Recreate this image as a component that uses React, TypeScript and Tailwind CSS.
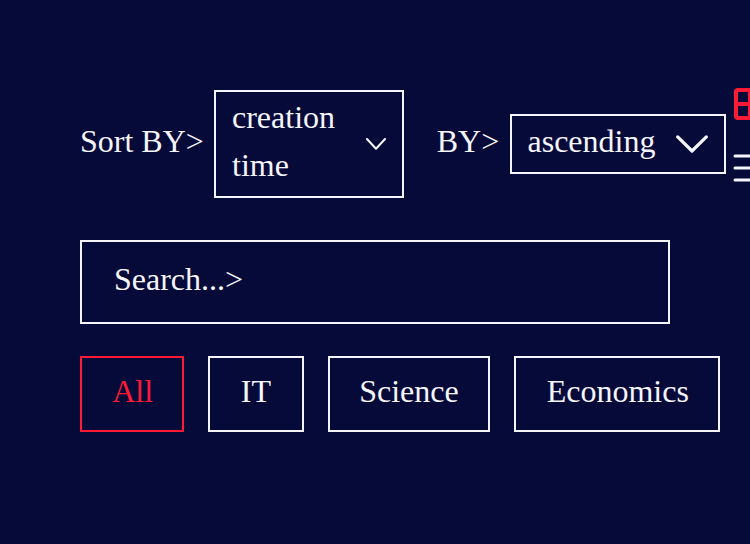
import React from "react";

const tabs = [
  { label: "All", size: "w-[104px] pl-[30.2px]", tone: "border-[#ff1a35] text-[#ff1a35]" },
  { label: "IT", size: "w-[96px] pl-[30.8px]", tone: "border-[#f5f5ff]" },
  { label: "Science", size: "w-[162px] pl-[29.2px]", tone: "border-[#f5f5ff]" },
  { label: "Economics", size: "w-[206px] pl-[30.7px]", tone: "border-[#f5f5ff]" },
];

export default function App() {
  return (
    <main className="h-[544px] w-[750px] overflow-hidden bg-[#050a38] pt-[88px] pl-20 font-['Liberation_Serif',serif] text-[32px] leading-[48px] text-[#f5f5ff]">
      <div className="flex w-[700px] items-start">
        <div className="flex h-28 shrink-0 items-center">
          <span className="w-[134px] whitespace-nowrap pb-1.5">Sort BY&gt;</span>
          <div className="flex h-[108px] w-[190px] items-center border-2 border-[#f5f5ff] pl-4">
            <span className="w-[120px] pb-1.5">creation time</span>
            <svg className="ml-[14px] h-3 w-5" viewBox="0 0 20 12" fill="none" stroke="currentColor" strokeWidth="2" strokeLinecap="round" strokeLinejoin="round">
              <path d="M1 1 10 10.8 19 1" />
            </svg>
          </div>
          <span className="ml-[32.7px] w-[73.3px] whitespace-nowrap pb-1.5">BY&gt;</span>
          <div className="flex h-[60px] w-[216px] items-center border-2 border-[#f5f5ff] pl-[15.5px]">
            <span className="w-[148.5px] pb-1.5">ascending</span>
            <svg className="h-[18px] w-8" viewBox="0 0 32 18" fill="none" stroke="currentColor" strokeWidth="3.2" strokeLinecap="round" strokeLinejoin="round">
              <path d="M1.7 1.9 16 16 30.300 1.9" />
            </svg>
          </div>
        </div>
        <div className="ml-2 flex shrink-0 flex-col">
          <svg className="h-8 w-8 text-[#ff1a35]" viewBox="0 0 32 32" fill="none" stroke="currentColor" strokeWidth="4">
            <rect x="2" y="2" width="28" height="28" rx="2" />
            <path d="M16 2V30M2 16H30" />
          </svg>
          <svg className="mt-8 h-8 w-8 overflow-visible" viewBox="0 0 32 32" fill="none" stroke="currentColor" strokeWidth="3" strokeLinecap="round">
            <path d="M1 4H30M1 16H30M1 28H30" />
          </svg>
        </div>
      </div>
      <div className="mt-10 flex h-[84px] w-[590px] items-center border-2 border-[#f5f5ff] pb-1.5 pl-8">Search...&gt;</div>
      <div className="mt-8 flex w-[700px] gap-6">
        {tabs.map((tab) => (
          <button key={tab.label} className={`${tab.size} ${tab.tone} h-[76px] shrink-0 border-2 pb-1.5 text-left`}>{tab.label}</button>
        ))}
      </div>
    </main>
  );
}
